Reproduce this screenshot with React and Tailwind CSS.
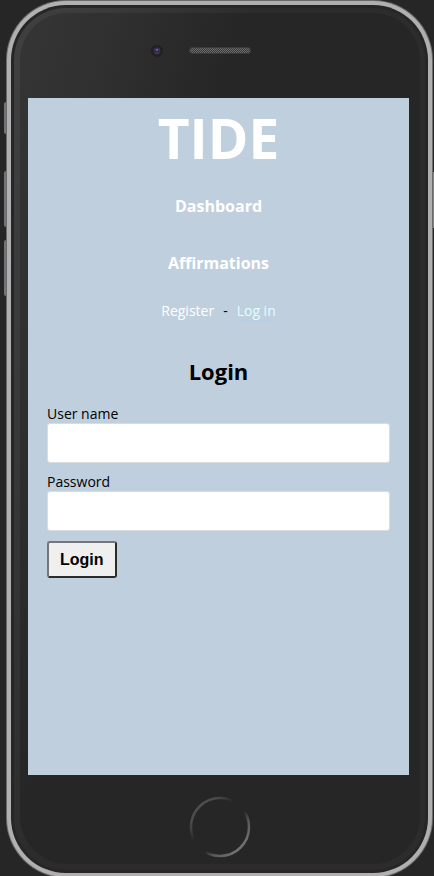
import React from "react";

function Camera() {
  return (
    <svg className="h-4 w-4" viewBox="0 0 16 16" aria-hidden="true">
      <circle cx="8" cy="8" r="6.5" fill="#202020" stroke="#2d2d2d" strokeWidth="1" />
      <circle cx="8" cy="8" r="3.4" fill="#3d3157" />
      <circle cx="8" cy="8.5" r="1.8" fill="#281f45" />
      <rect x="7" y="6.5" width="2" height="1" fill="#9b91ad" />
      <rect x="7.5" y="9" width="1" height="1" fill="#6d6286" />
    </svg>
  );
}

function Speaker() {
  return (
    <svg className="h-[7px] w-[62px]" viewBox="0 0 62 7" aria-hidden="true">
      <defs>
        <pattern id="mesh" width="2" height="2" patternUnits="userSpaceOnUse">
          <rect width="2" height="2" fill="#3d3d3d" />
          <rect width="1" height="1" fill="#686868" />
          <rect x="1" y="1" width="1" height="1" fill="#686868" />
        </pattern>
      </defs>
      <rect width="62" height="7" rx="3.5" fill="#3a3a3a" />
      <rect x="1" y="1" width="60" height="5" rx="2.5" fill="url(#mesh)" />
    </svg>
  );
}

function HomeButton() {
  return (
    <svg className="h-[62px] w-[62px]" viewBox="0 0 62 62" aria-hidden="true">
      <defs>
        <linearGradient id="ring" x1="0.12" y1="0.12" x2="0.88" y2="0.88">
          <stop offset="0" stopColor="#505050" />
          <stop offset="0.15" stopColor="#484848" />
          <stop offset="0.36" stopColor="#262626" />
          <stop offset="0.6" stopColor="#262626" />
          <stop offset="0.75" stopColor="#585858" />
          <stop offset="1" stopColor="#747474" />
        </linearGradient>
      </defs>
      <circle cx="31" cy="31" r="29" fill="none" stroke="url(#ring)" strokeWidth="2.5" />
    </svg>
  );
}

function Field({ id, label, type }) {
  return (
    <div className="mb-2.5">
      <label htmlFor={id} className="block h-[18px] text-sm leading-[18px]">
        {label}
      </label>
      <input
        id={id}
        type={type}
        className="block h-10 w-full rounded-[3px] border border-[#d9dde0] bg-white px-2.5 text-base outline-none"
      />
    </div>
  );
}

function Screen() {
  return (
    <div className="mr-[11px] ml-2 min-h-[677px] bg-[#bfcfde] px-[19px] pt-2 font-['Open_Sans','Noto_Sans',sans-serif] text-black">
      <header className="text-center">
        <h1 className="text-[55px] leading-[64px] font-bold text-white">TIDE</h1>
        <nav>
          <a href="#dashboard" className="mt-6 block text-base leading-6 font-bold text-white">
            Dashboard
          </a>
          <a href="#affirmations" className="mt-[33px] block text-base leading-6 font-bold text-white">
            Affirmations
          </a>
          <div className="mt-6 flex justify-center gap-[9px] text-sm leading-6">
            <a href="#register" className="text-white">Register</a>
            <span>-</span>
            <a
              href="#login"
              className="text-[#e0ffff] underline decoration-[#b5cfe6] decoration-1 underline-offset-4 [text-decoration-skip-ink:none]"
            >
              Log in
            </a>
          </div>
        </nav>
      </header>
      <main>
        <h2 className="mt-8 text-center text-[22px] leading-8 font-bold">Login</h2>
        <form className="mt-[18px]" onSubmit={(e) => e.preventDefault()}>
          <Field id="username" label="User name" type="text" />
          <Field id="password" label="Password" type="password" />
          <button
            type="submit"
            className="block h-[37px] rounded-[3px] border-2 border-t-[#767676] border-r-[#2b2b2b] border-b-[#2b2b2b] border-l-[#767676] bg-[#efefef] px-[11px] font-['Liberation_Sans',Arial,sans-serif] text-base leading-5 font-bold"
          >
            Login
          </button>
        </form>
      </main>
    </div>
  );
}

export default function App() {
  return (
    <div className="h-screen overflow-hidden bg-[#262626]">
      <div className="relative mr-px ml-1.5">
        <span className="absolute top-[102px] -left-0.5 h-8 w-0.5 rounded-l-sm bg-[#74737a]" />
        <span className="absolute top-[171px] -left-0.5 h-14 w-0.5 rounded-l-sm bg-[#74737a]" />
        <span className="absolute top-[240px] -left-0.5 h-14 w-0.5 rounded-l-sm bg-[#74737a]" />
        <span className="absolute top-[172px] -right-px h-14 w-px bg-[#828282]" />
        <div className="rounded-[60px] bg-[#6c6b6c] p-px">
          <div className="rounded-[59px] bg-[#b2afb0] p-1">
            <div className="rounded-[55px] bg-[#262626] p-[3px]">
              <div className="rounded-[52px] bg-[linear-gradient(105deg,#404040_0%,#3a3a3a_15%,#2c2c2c_38%)] pt-[5px] pr-[5px] pb-1.5 pl-1.5">
                <div className="rounded-[47px] bg-[linear-gradient(105deg,#353535_0%,#303030_15%,#262626_35%)]">
                  <div className="grid h-[85px] grid-cols-[1fr_62px_1fr] items-center pb-2.5">
                    <div className="flex justify-end pr-6">
                      <Camera />
                    </div>
                    <Speaker />
                  </div>
                  <Screen />
                  <div className="flex h-[89px] items-center justify-center pt-3.5">
                    <HomeButton />
                  </div>
                </div>
              </div>
            </div>
          </div>
        </div>
      </div>
    </div>
  );
}
